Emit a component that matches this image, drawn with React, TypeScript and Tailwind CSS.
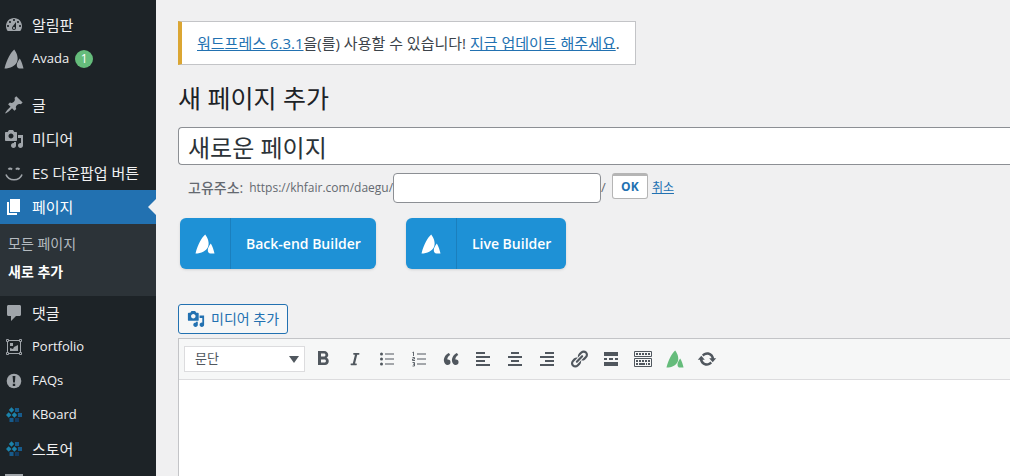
import type { ReactNode } from "react";
import { FaItalic } from "react-icons/fa";
import { MdFormatBold } from "react-icons/md";

type IconProps = { className?: string };

const paths = {
  dashboard:
    "M3.76 16h12.48c1.1-1.37 1.76-3.11 1.76-5 0-4.42-3.58-8-8-8s-8 3.58-8 8c0 1.89.66 3.63 1.76 5zM10 4c.55 0 1 .45 1 1s-.45 1-1 1-1-.45-1-1 .45-1 1-1zM6 6c.55 0 1 .45 1 1s-.45 1-1 1-1-.45-1-1 .45-1 1-1zm8 0c.55 0 1 .45 1 1s-.45 1-1 1-1-.45-1-1 .45-1 1-1zm-5.37 5.55L12 7v6c0 1.1-.9 2-2 2s-2-.9-2-2c0-.57.24-1.08.63-1.45zM4 10c.55 0 1 .45 1 1s-.45 1-1 1-1-.45-1-1 .45-1 1-1zm12 0c.55 0 1 .45 1 1s-.45 1-1 1-1-.45-1-1 .45-1 1-1zm-5 3c0-.55-.45-1-1-1s-1 .45-1 1 .45 1 1 1 1-.45 1-1z",
  avada:
    "M10.2 .5C6.5 4 3 10 .5 19.500C6.500 19.500 11 17 13 13C14.700 9.500 13 4 10.200 .5zM15.800 9.500C14 12 12.800 14 12.800 16.300C12.800 18.300 13.800 19.500 15.500 19.500H19.500C18.800 16 17.500 12.500 15.800 9.500z",
  pin: "M10.44 3.02l1.82-1.82 6.36 6.35-1.83 1.82c-1.05-.68-2.48-.57-3.41.36l-.75.75c-.92.93-1.04 2.35-.35 3.41l-1.83 1.82-2.41-2.41-2.8 2.79c-.42.42-3.38 2.71-3.8 2.29s1.86-3.39 2.28-3.81l2.79-2.79L4.1 9.36l1.83-1.82c1.05.69 2.48.57 3.4-.36l.75-.75c.93-.92 1.05-2.35.36-3.41z",
  media:
    "M13 11V4c0-.55-.45-1-1-1h-1.67L9 1H5L3.67 3H2c-.55 0-1 .45-1 1v7c0 .55.45 1 1 1h10c.55 0 1-.45 1-1zM7 4.5c1.38 0 2.5 1.12 2.5 2.5S8.38 9.5 7 9.5 4.5 8.38 4.5 7 5.62 4.5 7 4.5zM14 6h5v10.5c0 1.38-1.12 2.5-2.5 2.5S14 17.88 14 16.5s1.12-2.5 2.5-2.5c.17 0 .34.02.5.05V9h-3V6zm-4 8.05V13h2v3.5c0 1.38-1.12 2.5-2.5 2.5S7 17.88 7 16.5 8.12 14 9.5 14c.17 0 .34.02.5.05z",
  page: "M6 15V2h10v13H6zm-1 1h8v2H3V5h2v11z",
  comment:
    "M4.500 2h11c.9 0 1.500.6 1.500 1.500v8c0 .9-.6 1.500-1.500 1.500h-3.500l-5 5v-5H4.500c-.9 0-1.500-.6-1.500-1.500v-8C3 2.600 3.600 2 4.500 2z",
  panel: "M1 1h18v17H1z",
  quote:
    "M9.49 13.22c0-.74-.2-1.38-.61-1.9-.62-.78-1.83-.88-2.53-.72-.29-1.65 1.11-3.75 2.92-4.65L7.88 4c-2.73 1.3-5.42 4.28-4.96 8.05C3.21 14.43 4.59 16 6.54 16c.85 0 1.56-.25 2.12-.75s.83-1.18.83-2.03zm8.05 0c0-.74-.2-1.38-.61-1.9-.63-.78-1.83-.88-2.53-.72-.29-1.65 1.11-3.75 2.92-4.65L15.93 4c-2.73 1.3-5.41 4.28-4.95 8.05.29 2.38 1.66 3.95 3.61 3.95.85 0 1.56-.25 2.12-.75s.83-1.18.83-2.03z",
  alignLeft: "M3 3h9v2H3zM3 7h14v2H3zM3 11h9v2H3zM3 15h14v2H3z",
  alignCenter: "M6 3h8v2H6zM3 7h14v2H3zM6 11h8v2H6zM3 15h14v2H3z",
  alignRight: "M8 3h9v2H8zM3 7h14v2H3zM8 11h9v2H8zM3 15h14v2H3z",
  link: "M17.74 2.76c1.68 1.69 1.68 4.41 0 6.1l-1.53 1.52c-1.12 1.12-2.7 1.47-4.14 1.09l2.62-2.61.76-.77.76-.76c.84-.84.84-2.2 0-3.04-.84-.85-2.2-.85-3.04 0l-.77.76-3.38 3.38c-.37-1.44-.02-3.02 1.1-4.14l1.52-1.53c1.69-1.68 4.42-1.68 6.1 0zM8.59 13.43l5.34-5.34c.42-.42.42-1.1 0-1.52-.44-.43-1.13-.39-1.53 0l-5.33 5.34c-.42.42-.42 1.1 0 1.52.44.43 1.13.39 1.52 0zm-.76 2.29l4.14-4.15c.38 1.44.03 3.02-1.09 4.14l-1.52 1.53c-1.69 1.68-4.41 1.68-6.1 0-1.68-1.68-1.68-4.42 0-6.1l1.53-1.52c1.12-1.12 2.7-1.47 4.14-1.1l-4.14 4.15c-.85.84-.85 2.2 0 3.05.84.84 2.2.84 3.04 0z",
  more: "M3 3h14v4H3zM3 9h3v2H3zM8 9h4v2H8zM14 9h3v2h-3zM3 13h14v4H3z",
  update:
    "M10.2 3.28c3.53 0 6.43 2.61 6.92 6h2.08l-3.5 4-3.5-4h2.32c-.45-1.97-2.21-3.45-4.32-3.45-1.45 0-2.73.71-3.54 1.78L4.95 5.66C6.23 4.2 8.11 3.28 10.2 3.28zm-.4 13.44c-3.52 0-6.43-2.61-6.92-6H.8l3.5-4c1.17 1.33 2.33 2.67 3.5 4H5.48c.45 1.97 2.21 3.45 4.32 3.45 1.45 0 2.73-.71 3.54-1.78l1.71 1.95c-1.28 1.46-3.15 2.38-5.25 2.38z",
};

const Icon = ({
  name,
  className = "size-5",
}: IconProps & { name: keyof typeof paths }) => (
  <svg
    viewBox="0 0 20 20"
    fill="currentColor"
    fillRule="evenodd"
    aria-hidden="true"
    className={className}>
    <path d={paths[name]} />
  </svg>
);

const SmileIcon = () => (
  <svg
    viewBox="0 0 20 20"
    fill="none"
    stroke="currentColor"
    aria-hidden="true"
    className="size-5">
    <path d="M4.500 6.500q1.500-2 3.500 0M12 6.500q1.500-2 3.500 0" strokeWidth="2" />
    <path d="M2 11.500C4.500 18.500 15.500 18.500 18 11.500" strokeWidth="1.6" />
  </svg>
);

const PortfolioIcon = () => (
  <svg
    viewBox="0 0 20 20"
    fill="none"
    stroke="currentColor"
    aria-hidden="true"
    className="size-5">
    <path d="M4 3.500h12M4 16.500h12M3.500 4v12M16.500 4v12" />
    <path d="M2.500 2.500h2v2h-2zM15.500 2.500h2v2h-2zM2.500 15.500h2v2h-2zM15.500 15.500h2v2h-2z" />
    <path
      d="M6 6h3v3H6zM10 10l4-2v6H6v-3l3 1z"
      fill="currentColor"
      stroke="none"
    />
  </svg>
);

const WarningIcon = () => (
  <svg viewBox="0 0 20 20" aria-hidden="true" className="size-5">
    <circle cx="10" cy="10" r="7.3" fill="currentColor" />
    <path d="M8.600 5h2.800l-.5 6.500H9.100zM8.800 12.800h2.400v2.300H8.800z" fill="#1d2327" />
  </svg>
);

const BoardIcon = () => (
  <svg viewBox="0 0 20 20" aria-hidden="true" className="size-5">
    <path
      d="M7.500 2.300l2.700 2.700-2.700 2.700L4.800 5zM4.700 7.300L7.400 10l-2.700 2.700L2 10zM10.400 7.300L13.100 10l-2.700 2.700L7.700 10z"
      fill="#1b83ab"
    />
    <path
      d="M11 3h4v4h-4zM14 8h4v4h-4zM5.500 13h4v4h-4z"
      fill="#175b8c"
    />
    <path d="M11 13h4v4h-4z" fill="#123c63" />
  </svg>
);

const BulletListIcon = () => (
  <svg
    viewBox="0 0 20 20"
    fill="currentColor"
    aria-hidden="true"
    className="size-5">
    <circle cx="4.500" cy="5" r="1.500" />
    <circle cx="4.500" cy="10" r="1.500" />
    <circle cx="4.500" cy="15" r="1.500" />
    <path d="M8 4.500h9v1H8zM8 9.500h9v1H8zM8 14.500h9v1H8z" />
  </svg>
);

const NumberListIcon = () => (
  <svg
    viewBox="0 0 20 20"
    fill="none"
    stroke="currentColor"
    aria-hidden="true"
    className="size-5">
    <path d="M8 5h9M8 10h9M8 15h9" />
    <path
      d="M3.500 3.500l1-.5v4M3.500 8.500h2v1.500h-2v1.500h2.500M3.500 13.500h2v3.500h-2M4 15.200h1.500"
      strokeWidth="0.9"
    />
  </svg>
);

const KeyboardIcon = () => (
  <svg
    viewBox="0 0 20 20"
    fill="none"
    stroke="currentColor"
    aria-hidden="true"
    className="size-5">
    <path d="M1.500 2.500h17v5h-17zM1.500 9.500h17v8h-17z" />
    <path d="M3 5h14M3 12h14" strokeWidth="2" strokeDasharray="2 1" />
    <path d="M3 15h2M6 15h6M13 15h1M15 15h2" strokeWidth="2" />
  </svg>
);

type MenuItem = {
  label: string;
  icon: ReactNode;
  latin?: boolean;
  badge?: number;
  current?: boolean;
  children?: { label: string; current?: boolean }[];
};

const menuGroups: MenuItem[][] = [
  [
    { label: "알림판", icon: <Icon name="dashboard" /> },
    { label: "Avada", icon: <Icon name="avada" />, latin: true, badge: 1 },
  ],
  [
    { label: "글", icon: <Icon name="pin" /> },
    { label: "미디어", icon: <Icon name="media" /> },
    { label: "ES 다운팝업 버튼", icon: <SmileIcon /> },
    {
      label: "페이지",
      icon: <Icon name="page" />,
      current: true,
      children: [{ label: "모든 페이지" }, { label: "새로 추가", current: true }],
    },
    { label: "댓글", icon: <Icon name="comment" /> },
    { label: "Portfolio", icon: <PortfolioIcon />, latin: true },
    { label: "FAQs", icon: <WarningIcon />, latin: true },
    { label: "KBoard", icon: <BoardIcon />, latin: true },
    { label: "스토어", icon: <BoardIcon /> },
    { label: "", icon: <Icon name="panel" /> },
  ],
];

const tools: { label: string; icon: ReactNode }[] = [
  { label: "굵게", icon: <MdFormatBold className="size-6" /> },
  { label: "기울임", icon: <FaItalic className="size-3.5" /> },
  { label: "글머리 기호 목록", icon: <BulletListIcon /> },
  { label: "번호 목록", icon: <NumberListIcon /> },
  { label: "인용", icon: <Icon name="quote" /> },
  { label: "왼쪽 정렬", icon: <Icon name="alignLeft" /> },
  { label: "가운데 정렬", icon: <Icon name="alignCenter" /> },
  { label: "오른쪽 정렬", icon: <Icon name="alignRight" /> },
  { label: "링크", icon: <Icon name="link" /> },
  { label: "더보기 태그", icon: <Icon name="more" /> },
  { label: "툴바 토글", icon: <KeyboardIcon /> },
  {
    label: "Avada",
    icon: <Icon name="avada" className="size-[18px] text-[#65bc7b]" />,
  },
  { label: "새로고침", icon: <Icon name="update" /> },
];

const Sidebar = () => (
  <nav className="w-[156px] shrink-0 bg-[#1d2327] pt-2 text-[15px] text-[#f0f0f1]">
    {menuGroups.map((group, index) => (
      <ul key={index} className="mb-3">
        {group.map((item) => (
          <li key={item.label}>
            <a
              href="#"
              className={
                item.current
                  ? "relative flex h-[34px] items-center gap-2 bg-[#2271b1] pl-1 text-white"
                  : "flex h-[34px] items-center gap-2 pl-1"
              }>
              <span className={item.current ? "text-white" : "text-[#a0a5aa]"}>
                {item.icon}
              </span>
              <span
                className={
                  item.latin
                    ? "text-[13px] whitespace-nowrap"
                    : "whitespace-nowrap"
                }>
                {item.label}
              </span>
              {item.badge && (
                <span className="-ml-0.5 flex size-[18px] items-center justify-center rounded-full bg-[#65bc7b] text-xs text-white">
                  {item.badge}
                </span>
              )}
              {item.current && (
                <span className="absolute top-1/2 right-0 -translate-y-1/2 border-y-8 border-r-8 border-y-transparent border-r-[#f0f0f1]" />
              )}
            </a>
            {item.children && (
              <ul className="bg-[#2c3338] pt-1.5 pb-2.5 text-sm leading-7">
                {item.children.map((child) => (
                  <li key={child.label}>
                    <a
                      href="#"
                      className={
                        child.current
                          ? "block pl-2 font-bold text-white"
                          : "block pl-2 text-[#b5bbc0]"
                      }>
                      {child.label}
                    </a>
                  </li>
                ))}
              </ul>
            )}
          </li>
        ))}
      </ul>
    ))}
  </nav>
);

const BuilderButton = ({ label }: { label: string }) => (
  <button
    type="button"
    className="flex h-[51px] items-center rounded-md bg-[#1e91d6] text-sm font-semibold text-white shadow-sm">
    <span className="flex h-full w-[51px] items-center justify-center border-r border-[#1b7fbd]">
      <Icon name="avada" />
    </span>
    <span className="px-[15px]">{label}</span>
  </button>
);

const App = () => {
  return (
    <div className="flex h-screen overflow-hidden bg-[#f0f0f1] font-['Open_Sans','Noto_Sans_CJK_KR',sans-serif] text-[13px] text-[#3c434a]">
      <Sidebar />

      <main className="flex min-w-0 flex-1 flex-col items-start pt-[21px] pl-[22px]">
        <div className="flex h-11 items-center border border-l-4 border-[#c3c4c7] border-l-[#dba633] bg-white px-[15px] text-[15px]">
          <p>
            <a href="#" className="text-[#2271b1] underline">
              워드프레스 6.3.1
            </a>
            을(를) 사용할 수 있습니다!{" "}
            <a href="#" className="text-[#2271b1] underline">
              지금 업데이트 해주세요
            </a>
            .
          </p>
        </div>

        <h1 className="mt-[15px] text-[25px] leading-9 text-[#1d2327]">
          새 페이지 추가
        </h1>

        <input
          type="text"
          aria-label="제목"
          defaultValue="새로운 페이지"
          className="mt-[11px] h-[38px] w-full rounded-l border border-r-0 border-[#8c8f94] bg-white px-[9px] text-2xl text-[#2c3338]"
        />

        <div className="mt-2 flex h-[30px] items-center pl-2.5 text-[#646970]">
          <label htmlFor="slug" className="mr-1.5 text-sm font-medium">
            고유주소:
          </label>
          <span className="text-xs">https://khfair.com/daegu/</span>
          <input
            id="slug"
            type="text"
            className="h-[30px] w-52 rounded border border-[#8c8f94] bg-white px-2"
          />
          <span>/</span>
          <button
            type="button"
            className="mr-1 ml-1.5 h-[26px] w-9 self-start rounded-[3px] border border-t-[3px] border-[#b5b5b5] bg-white text-xs font-bold text-[#2271b1]">
            OK
          </button>
          <a href="#" className="text-xs text-[#2271b1] underline">
            취소
          </a>
        </div>

        <div className="mt-[15px] flex gap-[30px] pl-0.5">
          <BuilderButton label="Back-end Builder" />
          <BuilderButton label="Live Builder" />
        </div>

        <button
          type="button"
          className="mt-[35px] flex h-[30px] items-center gap-1.5 rounded-[3px] border border-[#2271b1] bg-[#f6f7f7] px-2 text-sm text-[#2271b1]">
          <Icon name="media" className="size-[18px]" />
          미디어 추가
        </button>

        <section className="mt-1 flex w-full flex-1 flex-col border-t border-l border-[#c3c4c7] bg-white">
          <div className="flex h-[41px] shrink-0 items-center border-b border-[#dcdcde] bg-[#f6f7f7] pl-[5px] text-[#50575e]">
            <div className="relative mr-0.5">
              <select
                aria-label="단락 형식"
                className="h-[26px] w-[121px] appearance-none border border-[#dcdcde] bg-white pl-2.5">
                <option>문단</option>
              </select>
              <span className="pointer-events-none absolute top-2.5 right-1.5 border-x-[5px] border-t-[7px] border-x-transparent border-t-[#50575e]" />
            </div>
            {tools.map((tool) => (
              <button
                key={tool.label}
                type="button"
                aria-label={tool.label}
                className="flex size-8 items-center justify-center">
                {tool.icon}
              </button>
            ))}
          </div>
          <textarea
            aria-label="본문"
            className="w-full flex-1 resize-none p-2.5 outline-none"
          />
        </section>
      </main>
    </div>
  );
};

export default App;
